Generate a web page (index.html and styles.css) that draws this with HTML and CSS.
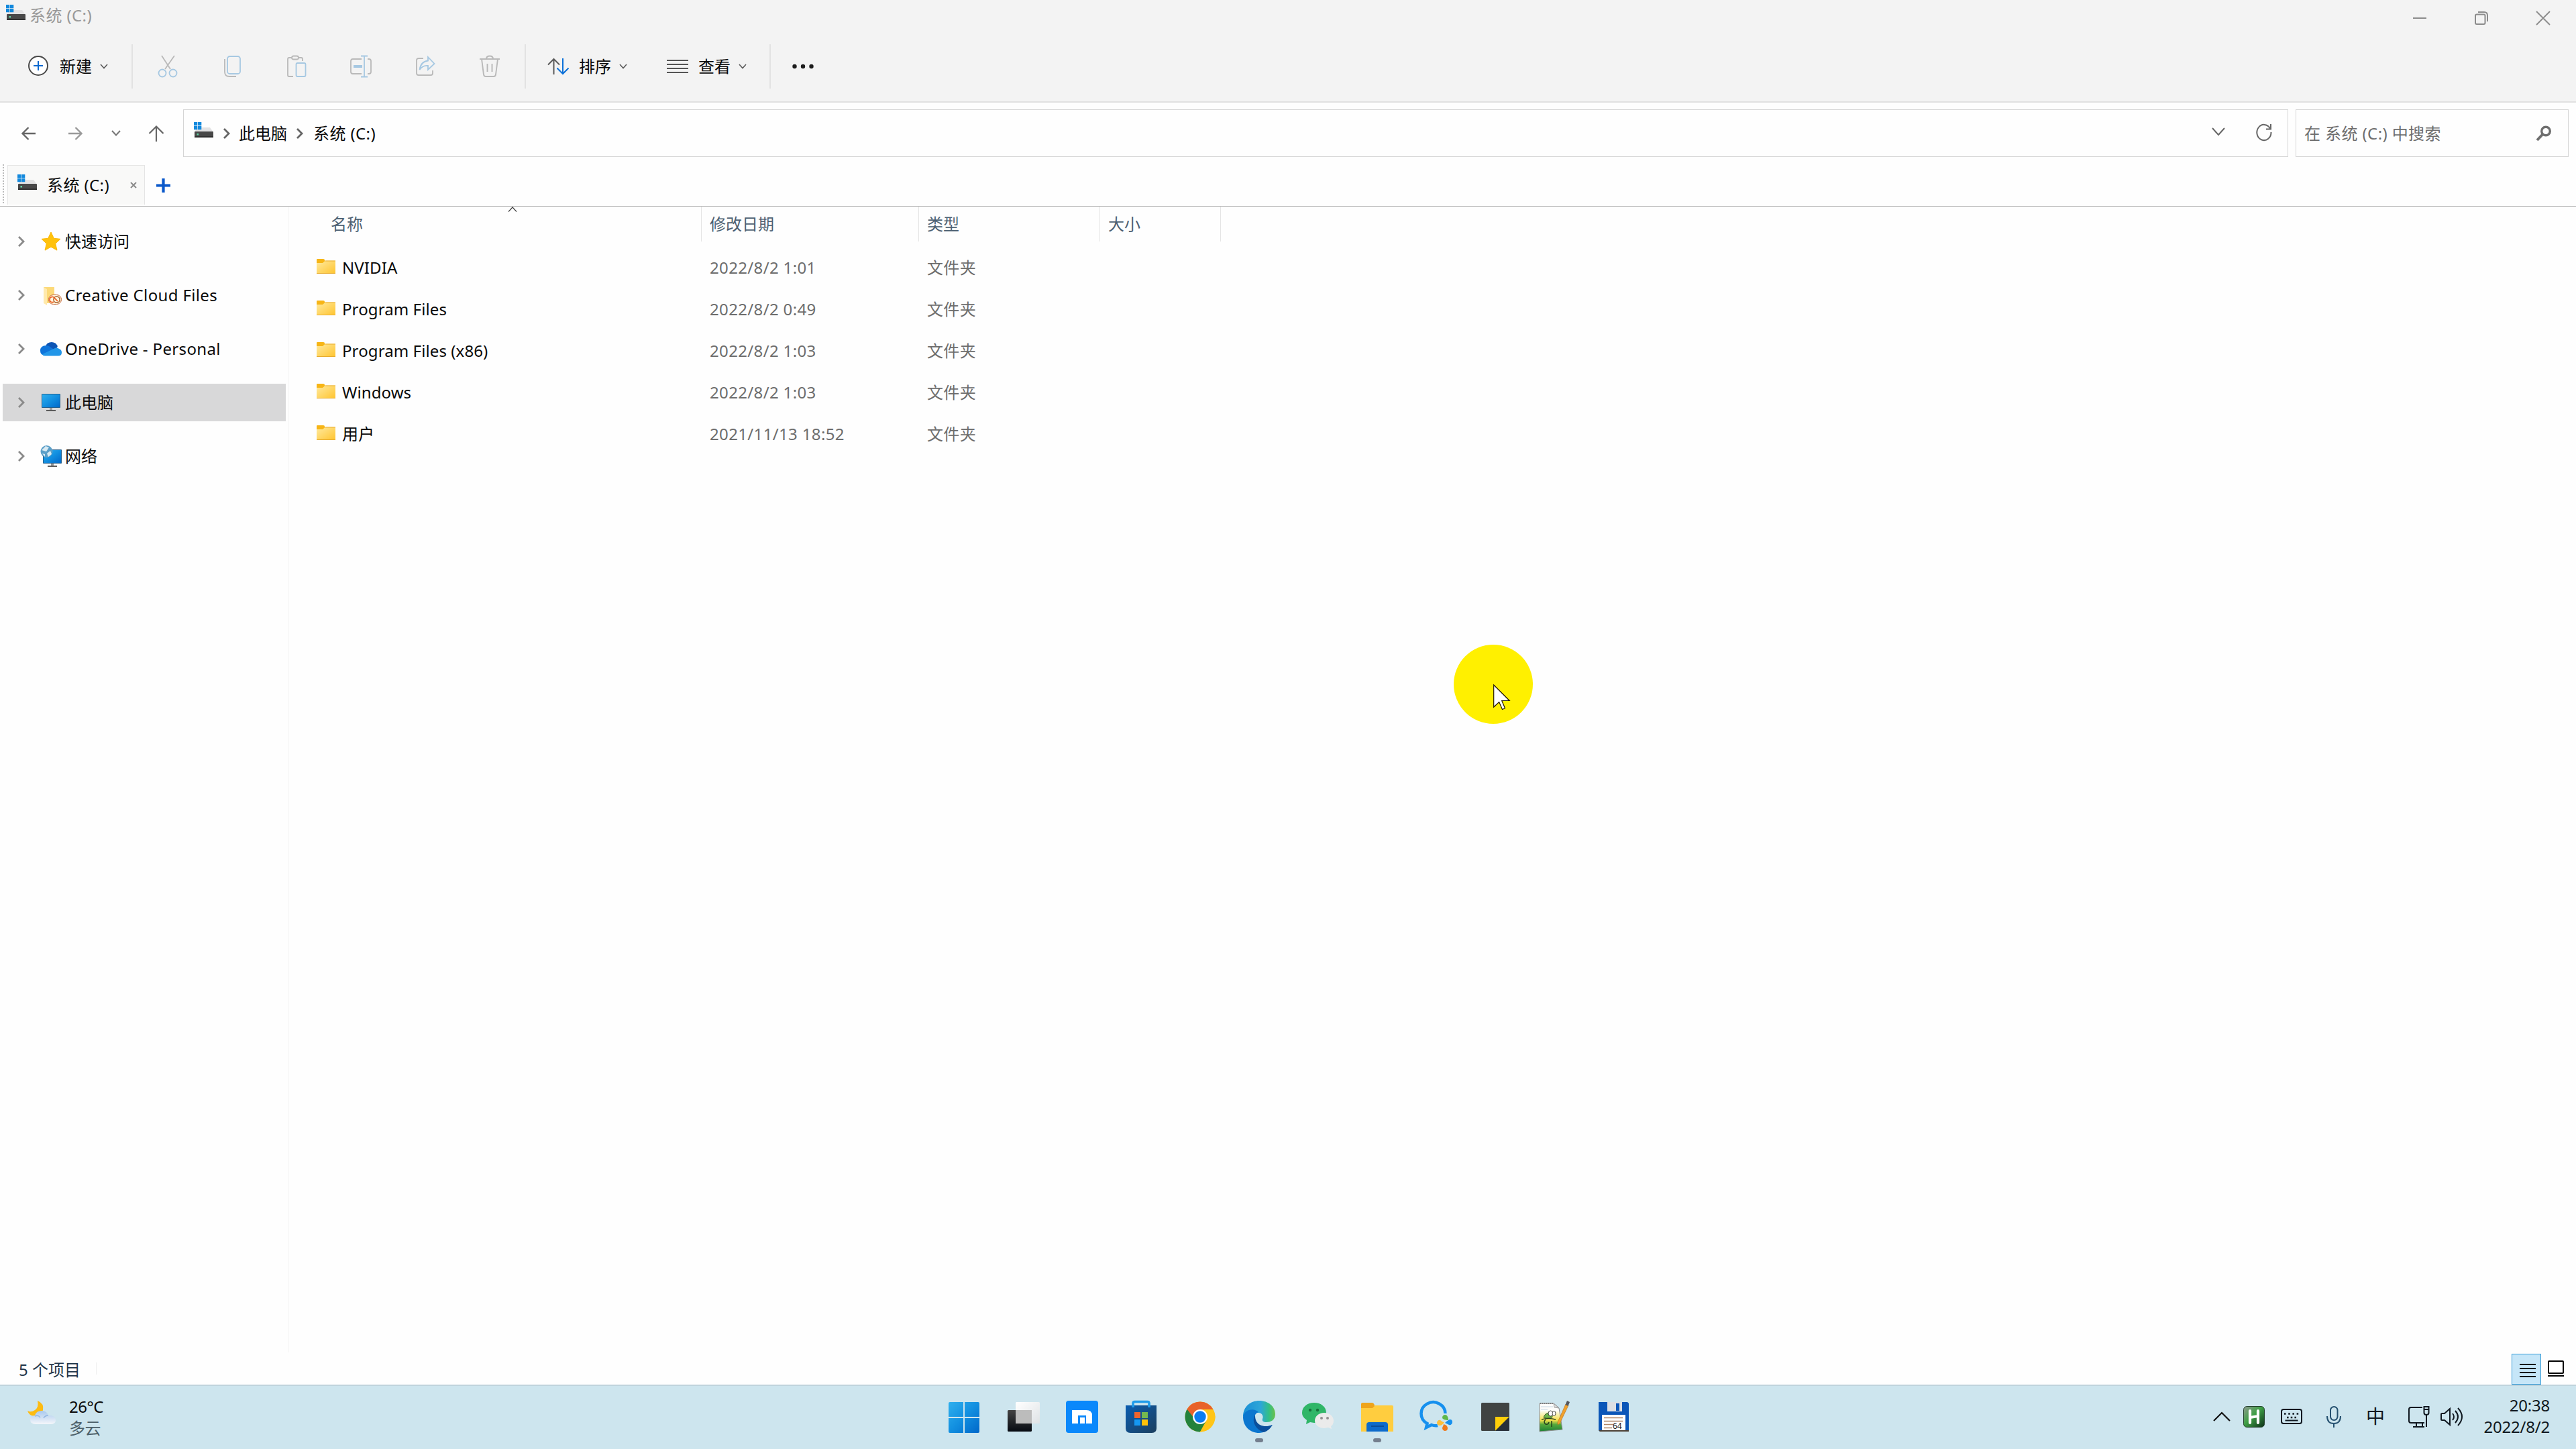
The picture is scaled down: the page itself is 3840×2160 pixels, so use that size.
FILE: index.html
```html
<!DOCTYPE html>
<html lang="zh-CN">
<head>
<meta charset="utf-8">
<title>系统 (C:)</title>
<link rel="stylesheet" href="styles.css">
</head>
<body>
<svg class="defs" width="0" height="0" aria-hidden="true">
  <defs>
    <linearGradient id="gWin" x1="0" y1="0" x2="1" y2="1"><stop offset="0" stop-color="#2fb0ee"/><stop offset=".5" stop-color="#128fe0"/><stop offset="1" stop-color="#0067c9"/></linearGradient>
    <linearGradient id="gFolder" x1="0" y1="0" x2="1" y2="1"><stop offset="0" stop-color="#ffeaa0"/><stop offset="1" stop-color="#ffc42e"/></linearGradient>
    <linearGradient id="gDark" x1="0" y1="0" x2="0" y2="1"><stop offset="0" stop-color="#434343"/><stop offset="1" stop-color="#070b12"/></linearGradient>
    <linearGradient id="gStore" x1="0" y1="0" x2="1" y2="1"><stop offset="0" stop-color="#0b5db0"/><stop offset="1" stop-color="#1b3f5e"/></linearGradient>
    <linearGradient id="gGlass" x1="0" y1="0" x2="1" y2="1"><stop offset="0" stop-color="#ffffff"/><stop offset="1" stop-color="#dfe3e6"/></linearGradient>
    <linearGradient id="gEdge" x1="0" y1="0" x2="1" y2="0"><stop offset="0" stop-color="#1a8fd6"/><stop offset=".55" stop-color="#2ea6d8"/><stop offset=".8" stop-color="#33bf86"/><stop offset="1" stop-color="#6cc04a"/></linearGradient>
    <linearGradient id="gCloud" x1="0" y1="0" x2="0" y2="1"><stop offset="0" stop-color="#a9c9ee"/><stop offset="1" stop-color="#f4f6fa"/></linearGradient>
    <linearGradient id="gHot" x1="0" y1="0" x2="1" y2="1"><stop offset="0" stop-color="#8f9a90"/><stop offset=".45" stop-color="#3fa046"/><stop offset="1" stop-color="#0b2f16"/></linearGradient>
    <linearGradient id="gNpp" x1="0" y1="0" x2="0" y2="1"><stop offset=".25" stop-color="#fdfdfb"/><stop offset=".6" stop-color="#f4e04a"/><stop offset=".75" stop-color="#55a83c"/><stop offset="1" stop-color="#1d7f35"/></linearGradient>
    <symbol id="drive" viewBox="0 0 30 24">
      <path d="M5 8h19l5 7H1z" fill="#e2e2e3"/>
      <rect x="1" y="14" width="28" height="9" rx="1" fill="#484848"/><rect x="1" y="21" width="28" height="2" fill="#303030"/>
      <rect x="4.500" y="17" width="2.500" height="2.500" fill="#5fd6a4"/>
      <path d="M0 0h5.300v5.300H0zM6 0h5.300v5.300H6zM0 6h5.300v5.300H0zM6 6h5.300v5.300H6z" fill="#1389dd"/>
    </symbol>
    <symbol id="folder" viewBox="0 0 28 22">
      <path d="M0 1q0-1 1-1h9q2 0 2 2v4H0z" fill="#f7b516"/>
      <path d="M0 6h9l4-3.500h15V22H0z" fill="url(#gFolder)"/>
      <path d="M12.500 3H28" stroke="#e9ae33" stroke-width="1"/><path d="M0 21.500h28" stroke="#e8ac2e"/>
    </symbol>
    <symbol id="chev" viewBox="0 0 12 8"><path d="M1 1l5 5.500L11 1" fill="none" stroke="#5a5a5a" stroke-width="1.600"/></symbol>
    <symbol id="right" viewBox="0 0 12 18"><path d="M2 2l7 7-7 7" fill="none" stroke="currentColor" stroke-width="2.800"/></symbol>
    <symbol id="screen" viewBox="0 0 28 26">
      <path d="M.5.500h27v20H.5z" fill="url(#gWin)" stroke="#245f8c"/><rect x="12" y="21" width="4" height="3" fill="#9a9a9a"/><rect x="7" y="24" width="14" height="2" fill="#5b5b5b"/>
    </symbol>
  </defs>
</svg>

<header class="chrome">
  <div class="titlebar">
    <svg class="title-icon" width="30" height="24"><use href="#drive"/></svg>
    <span class="title-text">系统 (C:)</span>
    <div class="window-controls">
      <svg width="20" height="20" viewBox="0 0 20 20"><path d="M0 10h20" stroke="#8b8b8b" stroke-width="2"/></svg>
      <svg width="20" height="20" viewBox="0 0 20 20" fill="none" stroke="#8b8b8b" stroke-width="2"><rect x="1" y="4.500" width="14.500" height="14.500" rx="2"/><path d="M5 1h9q5 0 5 5v9"/></svg>
      <svg width="20" height="20" viewBox="0 0 20 20"><path d="M0 0l20 20M20 0L0 20" stroke="#8b8b8b" stroke-width="1.800"/></svg>
    </div>
  </div>
  <div class="toolbar">
    <div class="tool tool-new">
      <svg width="32" height="32" viewBox="0 0 32 32"><circle cx="16" cy="15" r="14" fill="#fff" stroke="#484848" stroke-width="2"/><path d="M16 8v14M9 15h14" stroke="#0a69d0" stroke-width="2"/></svg>
      <span>新建</span>
      <svg class="caret" width="12" height="8"><use href="#chev"/></svg>
    </div>
    <i class="rule"></i>
    <div class="icon-group">
      <div class="icon-btn"><svg width="32" height="34" viewBox="0 0 32 34" fill="none" stroke-width="1.800"><path d="M7 1l13 20M26 1L12 21" stroke="#b9b9b9"/><circle cx="8" cy="27" r="5.500" stroke="#a6c8e2"/><circle cx="24" cy="27" r="5.500" stroke="#a6c8e2"/></svg></div>
      <div class="icon-btn"><svg width="32" height="34" viewBox="0 0 32 34" fill="none" stroke-width="1.800"><path d="M5 6v19q0 7 7 7h10" stroke="#b9b9b9"/><rect x="9" y="2" width="19" height="26" rx="3.500" stroke="#a6c8e2"/></svg></div>
      <div class="icon-btn"><svg width="32" height="34" viewBox="0 0 32 34" fill="none" stroke-width="1.800"><path d="M9 4H5q-2 0-2 2v24q0 2 2 2h6M19 4h4q2 0 2 2v3" stroke="#b9b9b9"/><rect x="9" y="1.500" width="10" height="5" rx="2.500" stroke="#b9b9b9"/><rect x="15.500" y="12" width="14" height="20" rx="2" stroke="#a6c8e2"/></svg></div>
      <div class="icon-btn"><svg width="34" height="34" viewBox="0 0 34 34" fill="none" stroke-width="1.800"><path d="M18 6H5Q2 6 2 9v16q0 3 3 3h13M27 6h2q3 0 3 3v16q0 3-3 3h-2" stroke="#b9b9b9"/><path d="M17 1.500h10M17 32.500h10M22 1.500v31" stroke="#a6c8e2"/><path d="M6 17h13" stroke="#a6c8e2" stroke-width="4"/></svg></div>
      <div class="icon-btn"><svg width="32" height="34" viewBox="0 0 32 34" fill="none" stroke-width="1.800"><path d="M13 5H6Q3 5 3 8v19q0 3 3 3h18q3 0 3-3v-4" stroke="#b9b9b9"/><path d="M20 3l9.500 10L20 22v-6q-8-1-12.500 6Q9 10 20 8.500z" stroke="#a6c8e2"/></svg></div>
      <div class="icon-btn"><svg width="32" height="34" viewBox="0 0 32 34" fill="none" stroke="#b9b9b9" stroke-width="1.900"><path d="M1 6h30M11 6q0-4.500 5-4.500T21 6M4 6l3 23q.5 3 3 3h12q2.500 0 3-3l3-23M12.500 13v12M19.500 13v12"/></svg></div>
    </div>
    <i class="rule"></i>
    <div class="tool tool-sort">
      <svg width="32" height="26" viewBox="0 0 32 26" fill="none" stroke-width="2"><path d="M9.500 25V2M1 10.500L9.500 2 18 10.500" stroke="#5b5b5b"/><path d="M23 1v23M14.500 15.500L23 24l8.500-8.500" stroke="#0a70d8"/></svg>
      <span>排序</span>
      <svg class="caret" width="12" height="8"><use href="#chev"/></svg>
    </div>
    <div class="tool tool-view">
      <svg width="32" height="22" viewBox="0 0 32 22"><path d="M0 2h32M0 8h32M0 14h32M0 20h32" stroke="#555" stroke-width="2"/></svg>
      <span>查看</span>
      <svg class="caret" width="12" height="8"><use href="#chev"/></svg>
    </div>
    <i class="rule"></i>
    <svg class="more" width="32" height="8" viewBox="0 0 32 8" fill="#1c1c1c"><circle cx="3.500" cy="4" r="3.200"/><circle cx="16" cy="4" r="3.200"/><circle cx="28.500" cy="4" r="3.200"/></svg>
  </div>
</header>

<nav class="navbar">
  <div class="nav-buttons">
    <svg width="22" height="20" viewBox="0 0 22 20" fill="none" stroke="#666" stroke-width="2.400"><path d="M21 10H2M10.500 1L1.500 10l9 9"/></svg>
    <svg width="22" height="20" viewBox="0 0 22 20" fill="none" stroke="#999" stroke-width="2.400"><path d="M1 10h19M11.500 1l9 9-9 9"/></svg>
    <svg width="14" height="10" viewBox="0 0 14 10" fill="none" stroke="#777" stroke-width="2"><path d="M1 1l6 6.500L13 1"/></svg>
    <svg width="24" height="24" viewBox="0 0 24 24" fill="none" stroke="#666" stroke-width="2.200"><path d="M12 24V2M1.500 12L12 1.500 22.500 12"/></svg>
  </div>
  <div class="address">
    <svg class="addr-icon" width="30" height="24"><use href="#drive"/></svg>
    <svg class="crumb-sep first" width="12" height="18"><use href="#right"/></svg>
    <span>此电脑</span>
    <svg class="crumb-sep" width="12" height="18"><use href="#right"/></svg>
    <span class="label">系统 (C:)</span>
    <div class="address-actions">
      <svg width="20" height="14" viewBox="0 0 20 14" fill="none" stroke="#666" stroke-width="2"><path d="M1 1l9 10 9-10"/></svg>
      <svg width="24" height="26" viewBox="0 0 24 26" fill="none" stroke="#666" stroke-width="2"><path d="M21 7.500A10.600 11.600 0 1 0 22.500 13M22 1v7.500h-7"/></svg>
    </div>
  </div>
  <div class="search">
    <span class="label">在 系统 (C:) 中搜索</span>
    <svg width="24" height="24" viewBox="0 0 24 24" fill="none" stroke="#6e6e6e"><circle cx="15" cy="8.500" r="6.300" stroke-width="3.400"/><path d="M10.500 13L2 22" stroke-width="4"/></svg>
  </div>
</nav>

<div class="tabs">
  <i class="grip"></i>
  <div class="tab">
    <svg width="30" height="24"><use href="#drive"/></svg>
    <span class="label">系统 (C:)</span>
    <svg class="tab-close" width="10" height="10" viewBox="0 0 10 10"><path d="M1 1l8 8M9 1L1 9" stroke="#8b8b8b" stroke-width="2"/></svg>
  </div>
  <svg class="tab-add" width="21" height="21" viewBox="0 0 21 21"><path d="M10.500 0v21M0 10.500h21" stroke="#0a58ca" stroke-width="4.200"/></svg>
</div>

<main class="body">
  <aside class="tree">
    <div class="node"><svg class="tw" width="12" height="18"><use href="#right"/></svg>
      <svg class="ni" width="32" height="32" viewBox="0 0 32 32"><path d="M16 2l4.300 9.300 9.700 1-7.300 6.800 2.300 10-9-5-9 5 2.300-10L2 12.300l9.700-1z" fill="#ffc20c" stroke="#fbb80a" stroke-linejoin="round"/></svg><span>快速访问</span></div>
    <div class="node"><svg class="tw" width="12" height="18"><use href="#right"/></svg>
      <svg class="ni" width="32" height="32" viewBox="0 0 32 32"><path d="M5 4h16v24H5z" fill="#fcd978"/><path d="M5 4l5 3v24l-5-3z" fill="#ffe9ac"/><rect x="12.500" y="15.500" width="19" height="14" rx="7" fill="#fff3dc" stroke="#c4693a"/><circle cx="24.500" cy="22.500" r="4.600" fill="none" stroke="#a3622e" stroke-width="1.500"/><path d="M20 26a4 4 0 1 1 1-6l5 5" fill="none" stroke="#ee5a1a" stroke-width="1.700"/></svg><span class="wide">Creative Cloud Files</span></div>
    <div class="node"><svg class="tw" width="12" height="18"><use href="#right"/></svg>
      <svg class="ni" width="32" height="32" viewBox="0 0 32 32"><path d="M8 12q2-6 9-6 6 0 9 6l-6 10z" fill="#0d55b5"/><path d="M8 26q-8 0-8-7 0-8 9-8 4 0 7 3l6 4-10 8z" fill="#0f74da"/><path d="M3 24l19-9q3-2 6 1 4 1 4 5.500 0 5-5 5H7q-3 0-4-2.500z" fill="#2296e8"/></svg><span class="wide">OneDrive - Personal</span></div>
    <div class="node selected"><svg class="tw" width="12" height="18"><use href="#right"/></svg>
      <svg class="ni" width="32" height="32" viewBox="0 0 32 32"><use href="#screen" x="2" y="3" width="28" height="26"/></svg><span>此电脑</span></div>
    <div class="node"><svg class="tw" width="12" height="18"><use href="#right"/></svg>
      <svg class="ni" width="32" height="32" viewBox="0 0 32 32"><use href="#screen" x="4" y="6" width="28" height="26"/><circle cx="9.500" cy="9" r="9" fill="#5b9fc8"/><path d="M2 7l6-6 5 2-4 6zM10 12l5-4 2 5-5 4zM3 12l4 1v4z" fill="#d7e9f2"/></svg><span>网络</span></div>
  </aside>
  <section class="files">
    <div class="grid head">
      <div class="c-name">名称<svg class="sort-mark" width="14" height="8" viewBox="0 0 14 8" fill="none" stroke="#444" stroke-width="1.200"><path d="M1 7.500L7 1l6 6.500"/></svg></div>
      <div>修改日期</div><div>类型</div><div>大小</div>
    </div>
    <div class="grid row"><div class="c-file"><svg width="28" height="22"><use href="#folder"/></svg><span>NVIDIA</span></div><div>2022/8/2 1:01</div><div>文件夹</div></div>
    <div class="grid row"><div class="c-file"><svg width="28" height="22"><use href="#folder"/></svg><span>Program Files</span></div><div>2022/8/2 0:49</div><div>文件夹</div></div>
    <div class="grid row"><div class="c-file"><svg width="28" height="22"><use href="#folder"/></svg><span>Program Files (x86)</span></div><div>2022/8/2 1:03</div><div>文件夹</div></div>
    <div class="grid row"><div class="c-file"><svg width="28" height="22"><use href="#folder"/></svg><span>Windows</span></div><div>2022/8/2 1:03</div><div>文件夹</div></div>
    <div class="grid row"><div class="c-file"><svg width="28" height="22"><use href="#folder"/></svg><span>用户</span></div><div>2021/11/13 18:52</div><div>文件夹</div></div>
  </section>
</main>

<footer class="status">
  <span>5 个项目</span><i class="status-rule"></i>
  <div class="view-switch">
    <div class="view-on"><svg width="24" height="20" viewBox="0 0 24 20"><path d="M0 1h24M0 7h24M0 13h24M0 19h24" stroke="#000" stroke-width="2"/></svg></div>
    <svg width="24" height="24" viewBox="0 0 24 24"><rect x="1" y="1" width="22" height="18" rx="1" fill="#fff" stroke="#000" stroke-width="2"/><path d="M0 23h24" stroke="#000" stroke-width="2"/></svg>
  </div>
</footer>

<div class="taskbar">
  <div class="weather">
    <svg width="44" height="38" viewBox="0 0 44 38"><path d="M16 1q10 4 8 14-3 10-13 9Q3 23 1 16q5 3 11-1 6-4 4-14z" fill="#fdbb12"/><path d="M13 36q-8 0-8-7 0-6 7-6 2-7 10-7 8 0 10 7h3q8 1 8 7 0 6-8 6z" fill="url(#gCloud)"/><path d="M12 24q5-2 8 2M32 23q-5 0-7 4" fill="none" stroke="#93b7e2" stroke-width="1.500"/></svg>
    <div class="weather-text"><span>26°C</span><span class="muted">多云</span></div>
  </div>
  <div class="apps">
    <div class="app"><svg width="48" height="48" viewBox="0 0 48 48"><path d="M3 2h20v22H1V4q0-2 2-2zM25 2h20q2 0 2 2v20H25zM1 26h22v22H3q-2 0-2-2zM25 26h22v20q0 2-2 2H25z" fill="url(#gWin)"/></svg></div>
    <div class="app"><svg width="48" height="48" viewBox="0 0 48 48"><rect x="1" y="14" width="36" height="32" rx="1.500" fill="url(#gDark)"/><rect x="13" y="2" width="36" height="32" rx="1.500" fill="url(#gGlass)"/><path d="M13 14h24v20H13z" fill="#bcbcbc"/></svg></div>
    <div class="app"><svg width="48" height="48" viewBox="0 0 48 48"><rect width="48" height="48" rx="4" fill="#0a88fb"/><path d="M9 14h21q9 0 9 8v12h-9V22H18v12H9z" fill="#fff"/><path d="M21 25h7v9h-7z" fill="#fff"/></svg></div>
    <div class="app"><svg width="48" height="48" viewBox="0 0 48 48"><path d="M1 7h46v34q0 7-7 7H8q-7 0-7-7z" fill="url(#gStore)"/><path d="M12 10V4q0-2.500 2.500-2.500h19Q36 1.500 36 4v6" fill="none" stroke="#1f9bea" stroke-width="3.600"/><path d="M14 17h9v9h-9z" fill="#f0642d"/><path d="M25 17h9v9h-9z" fill="#74b84f"/><path d="M14 28h9v9h-9z" fill="#1598f2"/><path d="M25 28h9v9h-9z" fill="#ffc10a"/></svg></div>
    <div class="app"><svg width="48" height="48" viewBox="0 0 48 48"><circle cx="24" cy="24" r="22.500" fill="#ffc517"/><path d="M24 24L4.500 12.800A22.500 22.500 0 0 0 24 46.500L34 29z" fill="#23823c"/><path d="M24 46.500L34 28l9-15q3 5 3.500 11A22.500 22.500 0 0 1 24 46.500z" fill="#ffc517"/><path d="M4.500 12.800A22.500 22.500 0 0 1 43.500 13H24l-9 13z" fill="#e8622a"/><circle cx="24" cy="24" r="11" fill="#fff"/><circle cx="24" cy="24" r="8.700" fill="#0b7cf0"/></svg></div>
    <div class="app running"><svg width="50" height="48" viewBox="0 0 48 48"><path d="M0 24C0 8 12 0 24 0c14 0 24 9 24 20 0 9-7 12-13 12-5 0-7-2-6-5 2-4-1-9-6-9C14 18 4 18 0 24z" fill="url(#gEdge)"/><path d="M0 24C2 13 16 10 23 17c-6 2-7 8-4 14 4 8 15 10 24 5-4 8-12 12-19 12C10 48 0 38 0 24z" fill="#0b76cf"/><path d="M18 21c-6 10 1 22 13 26 6-2 10-6 13-11-10 4-20 2-24-5-2-4-2-7-2-10z" fill="#0a4f9c"/></svg></div>
    <div class="app"><svg width="48" height="48" viewBox="0 0 48 48"><path d="M18 3c10 0 18 6 18 15 0 8-8 15-18 15l-6-1-6 3 1-6C3 26 0 23 0 18 0 9 8 3 18 3z" fill="#2fb667"/><circle cx="12" cy="14" r="2.200" fill="#17713c"/><circle cx="23" cy="14" r="2.200" fill="#17713c"/><path d="M33 18c8 0 14 5 14 12 0 4-2 7-4 8l1 4-5-2-6 1c-8 0-14-5-14-11 0-7 6-12 14-12z" fill="#ebebeb"/><circle cx="29" cy="26" r="2" fill="#909090"/><circle cx="38" cy="26" r="2" fill="#909090"/></svg></div>
    <div class="app running"><svg width="50" height="48" viewBox="0 0 50 48"><path d="M1 5q0-2 2-2h14q3 0 4 4v6H1z" fill="#eea41b"/><path d="M1 11h17l4-4h25q2 0 2 2v37H1z" fill="#ffcd3f"/><path d="M9 46V36q0-4 4-4h24q4 0 4 4v10z" fill="#0d6bcb"/><path d="M16 38h19" stroke="#0a4d99" stroke-width="2"/></svg></div>
    <div class="app"><svg width="48" height="48" viewBox="0 0 48 48"><path d="M37.500 19A18 17 0 1 0 10.500 34L9 40l8-4q5 2 9 1" fill="none" stroke="#1690ee" stroke-width="4.500"/><path d="M37 21c4 0 5 5 5 8-4 0-9-1-9-4 0-2 2-4 4-4z" fill="#5fb748"/><path d="M48 32c0 3-3 5-5 4s-4-2-6-3c3-3 6-5 8-5s3 2 3 4z" fill="#1590ee"/><path d="M37 45c-2 0-4-2-4-4s2-4 2-6c4 1 6 3 6 6s-2 4-4 4z" fill="#ee7a1d"/><path d="M25 33c0-3 3-5 5-4s3 3 6 3c-2 4-5 5-7 5s-4-2-4-4z" fill="#fcbf3c"/></svg></div>
    <div class="app"><svg width="48" height="48" viewBox="0 0 48 48"><rect x="3" y="3" width="42" height="42" rx="1.500" fill="#404342"/><path d="M24 45V24h21z" fill="#ffce09"/><path d="M24 45l21-21v19.500q0 1.500-1.500 1.500z" fill="#27303a"/></svg></div>
    <div class="app"><svg width="48" height="48" viewBox="0 0 48 48"><path d="M2 4h21l8 7 5 32-34 3z" fill="url(#gNpp)" stroke="#8d8d8d"/><path d="M23 4l1 6 7 1z" fill="#dcdcdc" stroke="#888" stroke-width=".8"/><path d="M3 4h19" stroke="#777" stroke-width="2" stroke-dasharray="1.500 1.500"/><path d="M4 9h18M4 13h10" stroke="#c7d5e2"/><path d="M8 25q2-7 9-7l3 3q3 4-2 5-5 1-10-1z" fill="#6db54a" stroke="#26411c" stroke-width=".8"/><path d="M5 28q10-3 21 0M11 28q-4 4 0 7 4 1 5-3M20 30v9" fill="none" stroke="#26411c" stroke-width="1.500"/><ellipse cx="18.500" cy="19" rx="3.500" ry="4" fill="#fff" stroke="#222" stroke-width=".8"/><ellipse cx="23.500" cy="19" rx="2.500" ry="3.500" fill="#fff" stroke="#222" stroke-width=".8"/><path d="M41 5l4 2-13 27-3 2v-4z" fill="#f0a12c" stroke="#b56c17" stroke-width=".6"/><path d="M43 0l4 2-2.500 6-4-2z" fill="#54565c"/></svg></div>
    <div class="app"><svg width="48" height="48" viewBox="0 0 48 48"><path d="M2 2h43l2 2v42H4l-2-2z" fill="#0b56b8"/><path d="M2 44h45v2H4z" fill="#4c4034"/><path d="M15 2h22v14H15z" fill="#dcdfe4"/><path d="M28 4h5v11h-5z" fill="#0b56b8"/><path d="M7 21h35v23H7z" fill="#fff"/><path d="M10 25.500h28M10 30.500h28M10 35.500h14M10 40.500h12" stroke="#b08768" stroke-width="1.500"/><text x="23" y="42" class="floppy-label">64</text></svg></div>
  </div>
  <div class="tray">
    <svg class="t-up" width="26" height="15" viewBox="0 0 26 15" fill="none" stroke="#111" stroke-width="2.200"><path d="M1 14L13 2l12 12"/></svg>
    <svg class="t-h" width="32" height="32" viewBox="0 0 32 32"><rect x=".5" y=".5" width="31" height="31" rx="5" fill="url(#gHot)" stroke="#23402c"/><path d="M10 7v18M22 7v18M10 17l12-2" stroke="#fff" stroke-width="4.200" stroke-linecap="round"/></svg>
    <svg class="t-kb" width="32" height="24" viewBox="0 0 32 24" fill="none" stroke="#101820" stroke-width="2"><rect x="1" y="1" width="30" height="21" rx="3"/><path d="M5 7.500h22" stroke-width="2.600" stroke-dasharray="2.600 3.600"/><path d="M9 13h14" stroke-width="2.600" stroke-dasharray="2.600 3.100"/><path d="M6.500 17.500h19"/></svg>
    <svg class="t-mic" width="22" height="32" viewBox="0 0 22 32" fill="none" stroke="#24506f" stroke-width="2"><rect x="6" y="1" width="10.500" height="20" rx="5.200"/><path d="M1 15q0 11 10 11t10-11M11 26v6"/></svg>
    <span class="t-ime">中</span>
    <svg class="t-net" width="32" height="32" viewBox="0 0 32 32" fill="none" stroke="#101820" stroke-width="2"><path d="M21 2H4Q1 2 1 5v17q0 3 3 3h20M12 25v5M21 25v5M7 31h17M27 13v18"/><path d="M23.500 1h7v9q0 3-3.500 3t-3.500-3zM23.500 5h7"/></svg>
    <svg class="t-vol" width="34" height="30" viewBox="0 0 34 30" fill="none" stroke="#101820" stroke-width="2"><path d="M1 11q0-1 1-1h4l8-7v24l-8-7H2q-1 0-1-1zM18 10q4 5 0 10M22 6q8 9 0 18M26 2q12 13 0 26"/></svg>
    <div class="clock"><span>20:38</span><span>2022/8/2</span></div>
  </div>
</div>

<div class="pointer">
  <svg width="26" height="40" viewBox="0 0 26 40"><path d="M.7 1v33l8-7.500 4.800 11 4-1.800-4.800-11.200h11.500z" fill="#fff" stroke="#201400" stroke-width="1.200"/></svg>
</div>
</body>
</html>
```
FILE: styles.css
```css
* { box-sizing: border-box; }
body {
  margin: 0;
  width: 3840px;
  height: 2160px;
  overflow: hidden;
  display: flex;
  flex-direction: column;
  background: #fefefe;
  color: #0a0a0a;
  font: 24px/32px "Noto Sans", "Noto Sans CJK SC", sans-serif;
}
svg { display: block; flex: none; overflow: visible; }
span { white-space: nowrap; }
.defs { position: absolute; }

/* title bar and command bar */
.chrome { height: 153px; background: #f3f3f3; border-bottom: 2px solid #e1e1e1; }
.titlebar { height: 48px; display: flex; align-items: flex-start; padding-left: 9px; color: #999; }
.title-icon { margin-top: 7px; }
.title-text { margin: 7px 0 0 5px; letter-spacing: .4px; }
.window-controls { margin: 17px 39px 0 auto; display: flex; gap: 72px; }
.toolbar { height: 102px; display: flex; align-items: center; }
.tool { display: flex; align-items: center; }
.tool span { width: 48px; margin-right: 12px; }
.tool-new { padding: 0 35px 0 41px; }
.tool-new span { margin-left: 16px; }
.tool-sort { padding-left: 32px; }
.tool-view { padding: 0 34px 0 59px; }
.tool-sort span, .tool-view span { margin-left: 15px; }
.rule { width: 2px; height: 66px; background: #e2e2e2; }
.icon-group { display: flex; margin: 0 4px; }
.icon-btn { width: 96px; display: flex; justify-content: center; }
.more { margin-left: 32px; }

/* navigation row */
.navbar { height: 90px; display: flex; padding-top: 10px; }
.nav-buttons { width: 273px; height: 71px; display: flex; align-items: center; padding-left: 32px; }
.nav-buttons svg:nth-child(2) { margin-left: 47px; }
.nav-buttons svg:nth-child(3) { margin-left: 43px; }
.nav-buttons svg:nth-child(4) { margin-left: 41px; }
.address { width: 3138px; height: 71px; border: 1px solid #d5d5d5; display: flex; align-items: center; padding-left: 15px; }
.addr-icon { margin-top: -10px; }
.crumb-sep { color: #666; margin: 0 14px 0 13px; }
.crumb-sep.first { margin: 0 12px 0 13px; }
.label { letter-spacing: .4px; }
.address-actions { display: flex; gap: 46px; align-items: center; margin: -3px 23px 0 auto; }
.search { width: 407px; height: 71px; margin-left: 11px; border: 1px solid #d5d5d5; display: flex; align-items: center; justify-content: space-between; padding: 0 24px 0 12px; color: #6e6e6e; }

/* tab strip */
.tabs { height: 65px; border-bottom: 1px solid #b6b6b6; display: flex; padding: 2px 0 0 4px; }
.grip { width: 2px; height: 58px; background: repeating-linear-gradient(#bbb 0 2px, transparent 2px 4px); }
.tab { width: 205px; height: 59px; margin: 1px 0 0 5px; border: 1px solid #e5e5e5; border-bottom: 0; background: #f9f9f8; display: flex; align-items: center; padding-left: 14px; }
.tab > svg:first-child { margin-top: -8px; }
.tab span { margin-left: 14px; width: 94px; }
.tab-close { margin-left: 30px; }
.tab-add { margin: 21px 0 0 17px; }

/* folder tree */
.body { flex: 1; display: flex; min-height: 0; }
.tree { width: 431px; padding: 24px 4px 0; border-right: 1px solid #f5f5f5; }
.node { height: 56px; margin: 0 0 24px; display: flex; align-items: center; padding-left: 22px; }
.node.selected { background: #d8d8d9; }
.tw { color: #8a8a8a; }
.ni { margin: 0 5px 0 22px; }
.wide { letter-spacing: .35px; }

/* file list */
.files { flex: 1; }
.grid { display: grid; grid-template-columns: 615px 324px 270px 180px; }
.head { height: 52px; color: #4c6072; margin-bottom: 8px; }
.head > div { border-right: 1px solid #e4e4e4; padding: 10px 0 0 12px; }
.head .c-name { position: relative; padding-left: 62px; }
.sort-mark { position: absolute; left: 326px; top: 0; }
.row { height: 62px; color: #6d6d6d; align-items: center; letter-spacing: .35px; }
.row > div { padding-left: 12px; }
.row .c-file { display: flex; align-items: center; gap: 10px; padding-left: 41px; color: #0a0a0a; letter-spacing: .1px; }
.c-file svg { margin-top: -4px; }

/* status bar */
.status { height: 48px; display: flex; align-items: center; padding-left: 28px; color: #1e3548; }
.status > span { margin-top: 3px; }
.status-rule { width: 1px; height: 18px; background: #eee; margin-left: 23px; }
.view-switch { margin-left: auto; display: flex; align-items: center; gap: 10px; padding-right: 18px; }
.view-on { width: 44px; height: 46px; margin-top: 2px; border: 1px solid #3399d6; background: #c6e6f8; display: flex; align-items: center; justify-content: center; padding: 4px 0 0 4px; }

/* taskbar */
.taskbar { height: 96px; background: #cde5ee; border-top: 2px solid #bfd3dc; display: flex; }
.weather { width: 1413px; display: flex; padding: 21px 0 0 40px; }
.weather-text { margin: -6px 0 0 19px; display: flex; flex-direction: column; letter-spacing: -.5px; }
.muted { color: #4c5f69; }
.apps { display: flex; gap: 40px; padding-top: 22px; }
.app { width: 48px; height: 66px; display: flex; flex-direction: column; align-items: center; }
.running::after { content: ""; width: 12px; height: 6px; margin-top: 8px; border-radius: 3px; background: #747f8e; }
.floppy-label { font: 12px "Noto Sans", sans-serif; fill: #222; }
.tray { margin-left: auto; display: flex; padding: 30px 39px 0 0; }
.t-up { margin-top: 8px; }
.t-h { margin-left: 19px; }
.t-kb { margin: 4px 0 0 24px; }
.t-mic { margin-left: 36px; }
.t-ime { margin: -1px 0 0 37px; width: 28px; font-size: 28px; color: #101820; }
.t-net { margin-left: 35px; }
.t-vol { margin: 1px 0 0 16px; }
.clock { width: 129px; margin-top: -17px; display: flex; flex-direction: column; align-items: flex-end; color: #101820; letter-spacing: -.2px; }

/* highlighted mouse pointer */
.pointer { position: absolute; left: 2167px; top: 961px; width: 118px; height: 118px; border-radius: 50%; background: #fff000; padding: 59px 0 0 59px; }
```
